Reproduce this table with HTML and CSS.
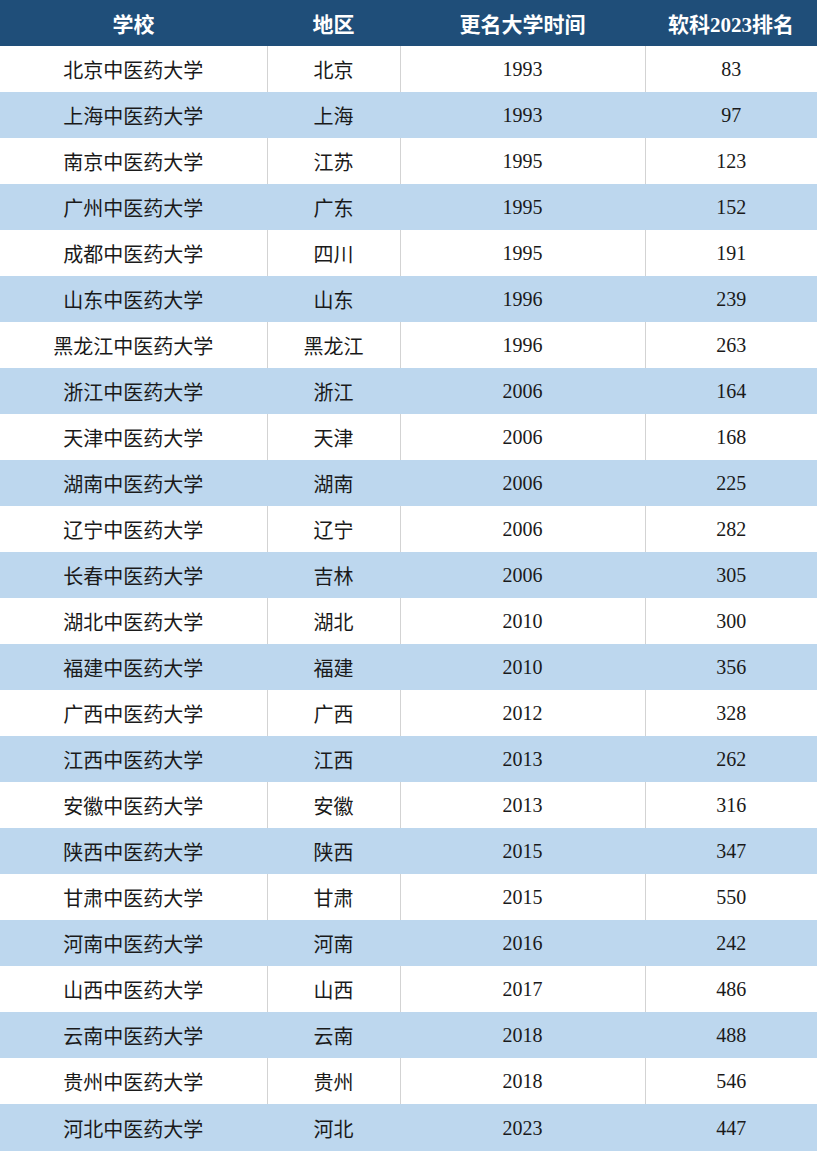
FILE: index.html
```html
<!DOCTYPE html>
<html lang="zh">
<head>
<meta charset="utf-8">
<link rel="stylesheet" href="styles.css">
</head>
<body>
<table class="rank-table">
<colgroup><col class="c1"><col class="c2"><col class="c3"><col class="c4"></colgroup>
<thead>
<tr><th>学校</th><th>地区</th><th>更名大学时间</th><th>软科2023排名</th></tr>
</thead>
<tbody>
<tr><td>北京中医药大学</td><td>北京</td><td>1993</td><td>83</td></tr>
<tr><td>上海中医药大学</td><td>上海</td><td>1993</td><td>97</td></tr>
<tr><td>南京中医药大学</td><td>江苏</td><td>1995</td><td>123</td></tr>
<tr><td>广州中医药大学</td><td>广东</td><td>1995</td><td>152</td></tr>
<tr><td>成都中医药大学</td><td>四川</td><td>1995</td><td>191</td></tr>
<tr><td>山东中医药大学</td><td>山东</td><td>1996</td><td>239</td></tr>
<tr><td>黑龙江中医药大学</td><td>黑龙江</td><td>1996</td><td>263</td></tr>
<tr><td>浙江中医药大学</td><td>浙江</td><td>2006</td><td>164</td></tr>
<tr><td>天津中医药大学</td><td>天津</td><td>2006</td><td>168</td></tr>
<tr><td>湖南中医药大学</td><td>湖南</td><td>2006</td><td>225</td></tr>
<tr><td>辽宁中医药大学</td><td>辽宁</td><td>2006</td><td>282</td></tr>
<tr><td>长春中医药大学</td><td>吉林</td><td>2006</td><td>305</td></tr>
<tr><td>湖北中医药大学</td><td>湖北</td><td>2010</td><td>300</td></tr>
<tr><td>福建中医药大学</td><td>福建</td><td>2010</td><td>356</td></tr>
<tr><td>广西中医药大学</td><td>广西</td><td>2012</td><td>328</td></tr>
<tr><td>江西中医药大学</td><td>江西</td><td>2013</td><td>262</td></tr>
<tr><td>安徽中医药大学</td><td>安徽</td><td>2013</td><td>316</td></tr>
<tr><td>陕西中医药大学</td><td>陕西</td><td>2015</td><td>347</td></tr>
<tr><td>甘肃中医药大学</td><td>甘肃</td><td>2015</td><td>550</td></tr>
<tr><td>河南中医药大学</td><td>河南</td><td>2016</td><td>242</td></tr>
<tr><td>山西中医药大学</td><td>山西</td><td>2017</td><td>486</td></tr>
<tr><td>云南中医药大学</td><td>云南</td><td>2018</td><td>488</td></tr>
<tr><td>贵州中医药大学</td><td>贵州</td><td>2018</td><td>546</td></tr>
<tr><td>河北中医药大学</td><td>河北</td><td>2023</td><td>447</td></tr>
</tbody>
</table>
</body>
</html>
```
FILE: styles.css
```css
html, body {
  margin: 0;
  padding: 0;
  background: #ffffff;
}
.rank-table {
  width: 817px;
  border-collapse: collapse;
  table-layout: fixed;
  font-family: "Liberation Serif", "Noto Sans CJK SC", serif;
  font-size: 20px;
  color: #1a1a1a;
}
.c1 { width: 267px; }
.c2 { width: 133px; }
.c3 { width: 245px; }
.c4 { width: 172px; }
.rank-table th {
  height: 46px;
  padding: 0;
  background: #1f4e79;
  color: #ffffff;
  font-weight: 700;
  font-size: 21px;
  text-align: center;
  vertical-align: middle;
}
.rank-table td {
  box-sizing: border-box;
  height: 46px;
  padding: 1px 0 0 0;
  text-align: center;
  vertical-align: middle;
  border-right: 1px solid #d3d3d3;
}
.rank-table td:last-child {
  border-right: none;
}
.rank-table tbody tr:nth-child(even) td {
  background: #bdd7ee;
  border-right-color: #bdd7ee;
}
.rank-table tbody tr:last-child td {
  height: 47px;
}
```
